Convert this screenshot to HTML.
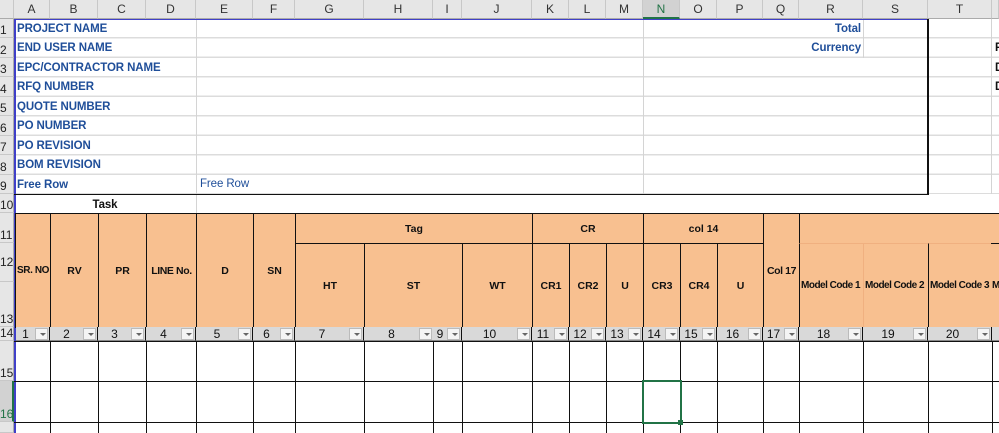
<!DOCTYPE html>
<html><head><meta charset="utf-8"><style>
*{margin:0;padding:0;box-sizing:border-box}
body{width:999px;height:433px;overflow:hidden;background:#fff;position:relative;font-family:"Liberation Sans",Calibri,sans-serif}
div{position:absolute}
.ch{top:0;height:19px;background:#e6e6e6;border-right:1px solid #c8c8c8;border-bottom:1px solid #ababab;font-size:12px;color:#333;text-align:center;line-height:19px}
.rh{left:0;width:14px;background:#e6e6e6;border-bottom:1px solid #c8c8c8;border-right:1px solid #ababab;font-size:12px;color:#222;text-align:left;overflow:hidden;display:flex;align-items:flex-end;line-height:14px}
.lbl{font-size:11.5px;font-weight:bold;color:#1f4e99;white-space:nowrap;line-height:20px;letter-spacing:-0.1px}
.hd{background:#f8c090;border:1px solid #111;font-size:10.5px;font-weight:bold;color:#111;display:flex;align-items:center;justify-content:center;white-space:nowrap;overflow:hidden}
.mc{justify-content:flex-start;font-size:10px;letter-spacing:-0.5px;padding-left:1px}
.f{background:#d9d9d9;border-bottom:1px solid #888;border-right:1px solid #111;font-size:12px;color:#111;line-height:14px}
.dd{position:absolute;top:1px;right:1px;width:13px;height:12px;background:#f4f4f4;border:1px solid #bbb}
.dd:after{content:"";position:absolute;left:4px;top:4px;border-left:3px solid transparent;border-right:3px solid transparent;border-top:3px solid #666}
.vl{width:1px;background:#111}
.hl{height:1px;background:#111}
</style></head><body>
<div class="ch" style="left:0;width:14px"></div>
<div class="ch" style="left:14px;width:36px">A</div>
<div class="ch" style="left:50px;width:48px">B</div>
<div class="ch" style="left:98px;width:48px">C</div>
<div class="ch" style="left:146px;width:50px">D</div>
<div class="ch" style="left:196px;width:57px">E</div>
<div class="ch" style="left:253px;width:42px">F</div>
<div class="ch" style="left:295px;width:69px">G</div>
<div class="ch" style="left:364px;width:69px">H</div>
<div class="ch" style="left:433px;width:29px">I</div>
<div class="ch" style="left:462px;width:70px">J</div>
<div class="ch" style="left:532px;width:37px">K</div>
<div class="ch" style="left:569px;width:37px">L</div>
<div class="ch" style="left:606px;width:37px">M</div>
<div class="ch" style="left:643px;width:37px;background:#d2d2d2;border-bottom:2px solid #217346;color:#217346">N</div>
<div class="ch" style="left:680px;width:37px">O</div>
<div class="ch" style="left:717px;width:46px">P</div>
<div class="ch" style="left:763px;width:36px">Q</div>
<div class="ch" style="left:799px;width:64px">R</div>
<div class="ch" style="left:863px;width:65px">S</div>
<div class="ch" style="left:928px;width:64px">T</div>
<div class="ch" style="left:992px;width:7px"></div>
<div class="rh" style="top:19px;height:19px">1</div>
<div class="rh" style="top:38px;height:20px">2</div>
<div class="rh" style="top:58px;height:19px">3</div>
<div class="rh" style="top:77px;height:20px">4</div>
<div class="rh" style="top:97px;height:19px">5</div>
<div class="rh" style="top:116px;height:20px">6</div>
<div class="rh" style="top:136px;height:19px">7</div>
<div class="rh" style="top:155px;height:20px">8</div>
<div class="rh" style="top:175px;height:19px">9</div>
<div class="rh" style="top:194px;height:19px">10</div>
<div class="rh" style="top:213px;height:30px">11</div>
<div class="rh" style="top:243px;height:39px;align-items:center">12</div>
<div class="rh" style="top:282px;height:45px">13</div>
<div class="rh" style="top:327px;height:14px">14</div>
<div class="rh" style="top:341px;height:40px">15</div>
<div class="rh" style="top:381px;height:41px;background:#d2d2d2;color:#217346;border-right:2px solid #217346">16</div>
<div class="rh" style="top:422px;height:11px"></div>
<div style="left:14px;top:19px;width:985px;height:175px;background:repeating-linear-gradient(#fff 0,#fff 18px,#dcdcdc 18px,#dcdcdc 19.5px)"></div>
<div style="left:196px;top:19px;width:1px;height:194px;background:#d4d4d4"></div>
<div style="left:643px;top:19px;width:1px;height:175px;background:#d4d4d4"></div>
<div style="left:863px;top:19px;width:1px;height:39px;background:#d4d4d4"></div>
<div style="left:991px;top:19px;width:1px;height:175px;background:#d4d4d4"></div>
<div style="left:14px;top:19px;width:2px;height:414px;background:#4040c8"></div>
<div style="left:14px;top:19px;width:914px;height:1px;background:#4040c8"></div>
<div style="left:927px;top:19px;width:2px;height:176px;background:#111"></div>
<div style="left:14px;top:194px;width:915px;height:1px;background:#111"></div>
<div class="lbl" style="left:17px;top:19px">PROJECT NAME</div>
<div class="lbl" style="left:17px;top:38px">END USER NAME</div>
<div class="lbl" style="left:17px;top:58px">EPC/CONTRACTOR NAME</div>
<div class="lbl" style="left:17px;top:77px">RFQ NUMBER</div>
<div class="lbl" style="left:17px;top:97px">QUOTE NUMBER</div>
<div class="lbl" style="left:17px;top:116px">PO NUMBER</div>
<div class="lbl" style="left:17px;top:136px">PO REVISION</div>
<div class="lbl" style="left:17px;top:155px">BOM REVISION</div>
<div class="lbl" style="left:17px;top:175px">Free Row</div>
<div class="lbl" style="left:200px;top:174px;font-weight:normal">Free Row</div>
<div class="lbl" style="left:799px;top:19px;width:62px;text-align:right">Total</div>
<div class="lbl" style="left:799px;top:38px;width:62px;text-align:right">Currency</div>
<div class="lbl" style="left:995px;top:38px;color:#111">F</div>
<div class="lbl" style="left:995px;top:58px;color:#111">D</div>
<div class="lbl" style="left:995px;top:77px;color:#111">D</div>
<div class="lbl" style="left:14px;top:195px;width:182px;text-align:center;color:#111">Task</div>
<div class="hd" style="left:15px;top:213px;width:36px;height:115px;font-size:10px;letter-spacing:-0.4px;justify-content:flex-start;padding-left:1px">SR. NO</div>
<div class="hd" style="left:50px;top:213px;width:49px;height:115px">RV</div>
<div class="hd" style="left:98px;top:213px;width:49px;height:115px">PR</div>
<div class="hd" style="left:146px;top:213px;width:51px;height:115px;letter-spacing:-0.4px">LINE No.</div>
<div class="hd" style="left:196px;top:213px;width:58px;height:115px">D</div>
<div class="hd" style="left:253px;top:213px;width:43px;height:115px">SN</div>
<div class="hd" style="left:295px;top:213px;width:238px;height:31px">Tag</div>
<div class="hd" style="left:532px;top:213px;width:112px;height:31px">CR</div>
<div class="hd" style="left:643px;top:213px;width:121px;height:31px">col 14</div>
<div class="hd" style="left:763px;top:213px;width:37px;height:115px;letter-spacing:-0.4px">Col 17</div>
<div class="hd" style="left:799px;top:213px;width:210px;height:31px"></div>
<div class="hd" style="left:295px;top:243px;width:70px;height:85px">HT</div>
<div class="hd" style="left:364px;top:243px;width:99px;height:85px">ST</div>
<div class="hd" style="left:462px;top:243px;width:71px;height:85px">WT</div>
<div class="hd" style="left:532px;top:243px;width:38px;height:85px">CR1</div>
<div class="hd" style="left:569px;top:243px;width:38px;height:85px">CR2</div>
<div class="hd" style="left:606px;top:243px;width:38px;height:85px">U</div>
<div class="hd" style="left:643px;top:243px;width:38px;height:85px">CR3</div>
<div class="hd" style="left:680px;top:243px;width:38px;height:85px">CR4</div>
<div class="hd" style="left:717px;top:243px;width:47px;height:85px">U</div>
<div class="hd mc" style="left:799px;top:243px;width:65px;height:85px;border-color:#f0b080 #f0b080 #111 #111">Model Code 1</div>
<div class="hd mc" style="left:863px;top:243px;width:66px;height:85px;border-color:#f0b080 #f0b080 #111 #f0b080">Model Code 2</div>
<div class="hd mc" style="left:928px;top:243px;width:64px;height:85px;border-color:#f0b080 #111 #111 #111">Model Code 3</div>
<div class="hd mc" style="left:991px;top:243px;width:20px;height:85px;border-left:none">M</div>
<div class="f" style="left:16px;top:327px;width:34px;height:14px;text-align:center;padding-right:14px">1<span class="dd"></span></div>
<div class="f" style="left:50px;top:327px;width:48px;height:14px;text-align:center;padding-right:14px">2<span class="dd"></span></div>
<div class="f" style="left:98px;top:327px;width:48px;height:14px;text-align:center;padding-right:14px">3<span class="dd"></span></div>
<div class="f" style="left:146px;top:327px;width:50px;height:14px;text-align:center;padding-right:14px">4<span class="dd"></span></div>
<div class="f" style="left:196px;top:327px;width:57px;height:14px;text-align:center;padding-right:14px">5<span class="dd"></span></div>
<div class="f" style="left:253px;top:327px;width:42px;height:14px;text-align:center;padding-right:14px">6<span class="dd"></span></div>
<div class="f" style="left:295px;top:327px;width:69px;height:14px;text-align:center;padding-right:14px">7<span class="dd"></span></div>
<div class="f" style="left:364px;top:327px;width:69px;height:14px;text-align:center;padding-right:14px;border-right:none">8<span class="dd"></span></div>
<div class="f" style="left:433px;top:327px;width:29px;height:14px;text-align:center;padding-right:14px">9<span class="dd"></span></div>
<div class="f" style="left:462px;top:327px;width:70px;height:14px;text-align:center;padding-right:14px">10<span class="dd"></span></div>
<div class="f" style="left:532px;top:327px;width:37px;height:14px;text-align:center;padding-right:14px">11<span class="dd"></span></div>
<div class="f" style="left:569px;top:327px;width:37px;height:14px;text-align:center;padding-right:14px">12<span class="dd"></span></div>
<div class="f" style="left:606px;top:327px;width:37px;height:14px;text-align:center;padding-right:14px">13<span class="dd"></span></div>
<div class="f" style="left:643px;top:327px;width:37px;height:14px;text-align:center;padding-right:14px">14<span class="dd"></span></div>
<div class="f" style="left:680px;top:327px;width:37px;height:14px;text-align:center;padding-right:14px">15<span class="dd"></span></div>
<div class="f" style="left:717px;top:327px;width:46px;height:14px;text-align:center;padding-right:14px">16<span class="dd"></span></div>
<div class="f" style="left:763px;top:327px;width:36px;height:14px;text-align:center;padding-right:14px">17<span class="dd"></span></div>
<div class="f" style="left:799px;top:327px;width:64px;height:14px;text-align:center;padding-right:14px">18<span class="dd"></span></div>
<div class="f" style="left:863px;top:327px;width:65px;height:14px;text-align:center;padding-right:14px">19<span class="dd"></span></div>
<div class="f" style="left:928px;top:327px;width:64px;height:14px;text-align:center;padding-right:14px">20<span class="dd"></span></div>
<div class="f" style="left:992px;top:327px;width:10px;height:14px"></div>
<div class="hl" style="left:14px;top:341px;width:985px"></div>
<div class="hl" style="left:14px;top:381px;width:985px"></div>
<div class="hl" style="left:14px;top:422px;width:985px"></div>
<div class="vl" style="left:50px;top:341px;height:92px"></div>
<div class="vl" style="left:98px;top:341px;height:92px"></div>
<div class="vl" style="left:146px;top:341px;height:92px"></div>
<div class="vl" style="left:196px;top:341px;height:92px"></div>
<div class="vl" style="left:253px;top:341px;height:92px"></div>
<div class="vl" style="left:295px;top:341px;height:92px"></div>
<div class="vl" style="left:364px;top:341px;height:92px"></div>
<div class="vl" style="left:433px;top:341px;height:92px"></div>
<div class="vl" style="left:462px;top:341px;height:92px"></div>
<div class="vl" style="left:532px;top:341px;height:92px"></div>
<div class="vl" style="left:569px;top:341px;height:92px"></div>
<div class="vl" style="left:606px;top:341px;height:92px"></div>
<div class="vl" style="left:643px;top:341px;height:92px"></div>
<div class="vl" style="left:680px;top:341px;height:92px"></div>
<div class="vl" style="left:717px;top:341px;height:92px"></div>
<div class="vl" style="left:763px;top:341px;height:92px"></div>
<div class="vl" style="left:799px;top:341px;height:92px"></div>
<div class="vl" style="left:863px;top:341px;height:92px"></div>
<div class="vl" style="left:928px;top:341px;height:92px"></div>
<div class="vl" style="left:992px;top:341px;height:92px"></div>
<div style="left:642px;top:380px;width:40px;height:44px;border:2px solid #217346"></div>
<div style="left:678px;top:420px;width:5px;height:5px;background:#217346"></div>
</body></html>
